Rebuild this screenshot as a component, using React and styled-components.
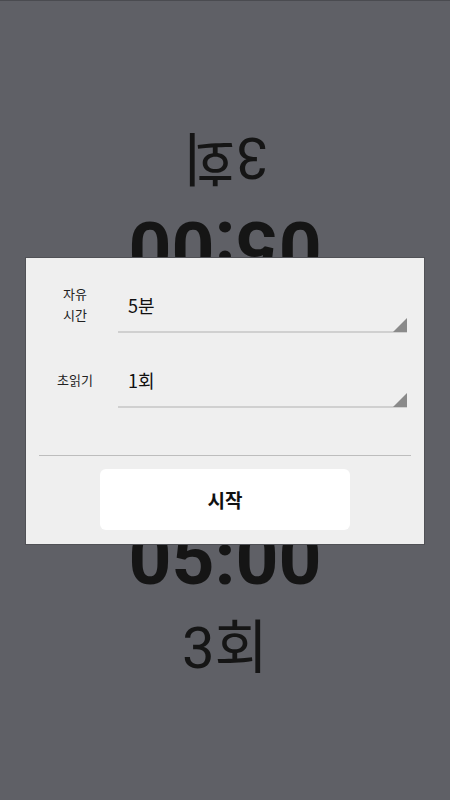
import React from "react";
import styled, { createGlobalStyle } from "styled-components";

const Global = createGlobalStyle`
  html, body { margin: 0; padding: 0; background: #5f6066; }
  body { font-family: Roboto, "Noto Sans CJK KR", sans-serif; }
`;

const Screen = styled.div`
  position: relative;
  width: 450px;
  height: 800px;
  box-sizing: border-box;
  padding-top: 5px;
  background: #5f6066;
  border-top: 1px solid #4a4b50;
  display: flex;
  flex-direction: column;
  overflow: hidden;
`;

const Half = styled.div`
  flex: 1;
  display: flex;
  flex-direction: column;
  align-items: center;
  padding-top: 118px;
  transform: ${(p) => (p.$flipped ? "rotate(180deg)" : "none")};
`;

const Timer = styled.div`
  font-family: Roboto, sans-serif;
  font-weight: 700;
  font-size: 75px;
  line-height: 1;
  color: #151515;
`;

const Count = styled.div`
  margin-top: 23px;
  font-family: Roboto, "Noto Sans CJK KR", sans-serif;
  font-weight: 400;
  font-size: 58px;
  line-height: 1;
  color: #151515;
`;

const Dialog = styled.div`
  position: absolute;
  left: 25px;
  top: 256px;
  width: 400px;
  box-sizing: border-box;
  background: #efefef;
  border: 1px solid #505156;
  padding: 23px 0 14px;
  display: flex;
  flex-direction: column;
  font-family: "Noto Sans CJK KR", sans-serif;
  color: #111;
`;

const Row = styled.div`
  display: grid;
  grid-template-columns: 92px 1fr;
  align-items: center;
  padding-right: 17px;
  margin-bottom: ${(p) => p.$gap || 0}px;
`;

const Label = styled.div`
  padding-left: 6px;
  text-align: center;
  font-size: 13px;
  line-height: 21px;
  color: #222;
  margin-top: -6px;
`;

const Field = styled.div`
  position: relative;
  height: 50px;
  border-bottom: 2px solid #d0d0d0;
  display: flex;
  align-items: center;
  padding: 0 10px;
  font-size: 18px;
  color: #111;
`;

const Value = styled.span`
  margin-top: -2px;
`;

const Arrow = styled.svg`
  position: absolute;
  right: 0;
  bottom: -1px;
  width: 14px;
  height: 14px;
`;

const Divider = styled.div`
  height: 1px;
  background: #bdbdbd;
  margin: 47px 13px 13px;
`;

const StartButton = styled.button`
  align-self: center;
  width: 250px;
  height: 61px;
  border: none;
  border-radius: 6px;
  background: #ffffff;
  font-family: "Noto Sans CJK KR", sans-serif;
  font-size: 19px;
  font-weight: 700;
  color: #111;
  padding: 0;
`;

const Select = ({ value }) => (
  <Field>
    <Value>{value}</Value>
    <Arrow viewBox="0 0 14 14">
      <polygon points="14,0 14,14 0,14" fill="#8a8a8a" />
    </Arrow>
  </Field>
);

export default function App() {
  return (
    <>
      <Global />
      <Screen>
        <Half $flipped>
          <Timer>05:00</Timer>
          <Count>3회</Count>
        </Half>
        <Half>
          <Timer>05:00</Timer>
          <Count>3회</Count>
        </Half>
        <Dialog>
          <Row $gap={23}>
            <Label>
              자유
              <br />
              시간
            </Label>
            <Select value="5분" />
          </Row>
          <Row>
            <Label>초읽기</Label>
            <Select value="1회" />
          </Row>
          <Divider />
          <StartButton>시작</StartButton>
        </Dialog>
      </Screen>
    </>
  );
}
